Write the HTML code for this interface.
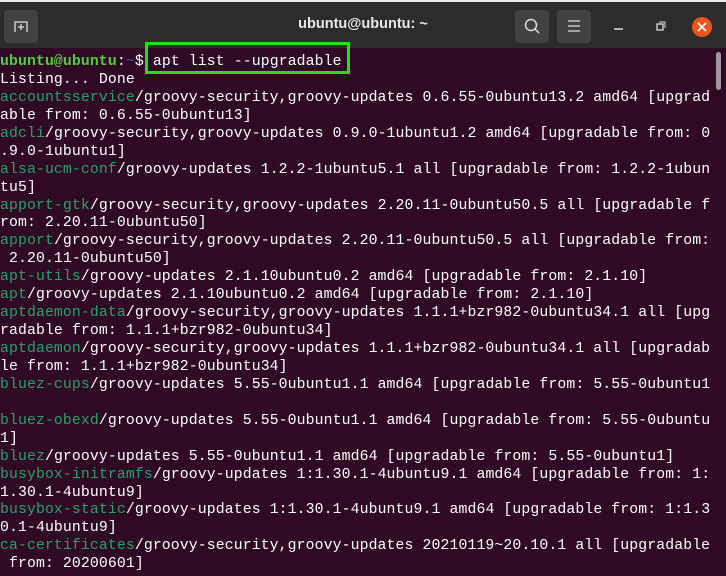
<!DOCTYPE html>
<html><head><style>
*{margin:0;padding:0;box-sizing:border-box}
body{width:726px;height:576px;overflow:hidden;background:#300a24;position:relative;font-family:"Liberation Sans",sans-serif}
.top{position:absolute;left:0;top:0;width:726px;height:2px;background:#ececec}
.hdr{position:absolute;left:0;top:2px;width:726px;height:46px;background:#2c2c2c}
.btn{position:absolute;top:8px;width:34px;height:33px;background:#424242;border-radius:4px}
.title{position:absolute;left:0;width:726px;top:14px;text-align:center;color:#e8e8e8;font-weight:bold;font-size:14.5px}
pre{position:absolute;left:0;top:54px;font-family:"Liberation Mono",monospace;font-size:14.8px;letter-spacing:0.11px;line-height:17.93px;color:#ffffff;white-space:pre}
.g{color:#26a269}.b{color:#3465a4}.gb{color:#4ecf3a;font-weight:bold}
.box{position:absolute;left:145px;top:42px;width:205px;height:32px;border:3px solid #22e01a}
.sb{position:absolute;left:716px;top:52px;width:5px;height:38px;background:#9a9a9a;border-radius:3px}
</style></head><body>
<div class="top"></div>
<div class="hdr">
<div class="btn" style="left:4px"><svg width="34" height="33"><path d="M11 22V12h12v10M17 14v6M14 17h6" stroke="#ddd" stroke-width="1.3" fill="none"/></svg></div>
<div class="title">ubuntu@ubuntu: ~</div>
<div class="btn" style="left:515px"><svg width="34" height="33"><circle cx="16" cy="15" r="5.5" stroke="#ddd" stroke-width="1.5" fill="none"/><path d="M20 19l4 4" stroke="#ddd" stroke-width="1.5"/></svg></div>
<div class="btn" style="left:557px"><svg width="34" height="33"><path d="M11 11h12M11 16h12M11 21h12" stroke="#ddd" stroke-width="1.3"/></svg></div>
<svg style="position:absolute;left:610px;top:10px" width="110" height="30"><path d="M4 17h9" stroke="#ddd" stroke-width="1.5"/><rect x="47" y="12" width="6" height="6" stroke="#ddd" stroke-width="1.3" fill="none"/><path d="M49 10h6v6" stroke="#ddd" stroke-width="1" fill="none"/><circle cx="92" cy="15" r="10" fill="#e95420"/><path d="M88 11l8 8M96 11l-8 8" stroke="#fff" stroke-width="1.6"/></svg>
</div>
<pre><span class="gb">ubuntu@ubuntu</span>:<span class="b">~</span>$ apt list --upgradable
Listing... Done
<span class="g">accountsservice</span>/groovy-security,groovy-updates 0.6.55-0ubuntu13.2 amd64 [upgrad
able from: 0.6.55-0ubuntu13]
<span class="g">adcli</span>/groovy-security,groovy-updates 0.9.0-1ubuntu1.2 amd64 [upgradable from: 0
.9.0-1ubuntu1]
<span class="g">alsa-ucm-conf</span>/groovy-updates 1.2.2-1ubuntu5.1 all [upgradable from: 1.2.2-1ubun
tu5]
<span class="g">apport-gtk</span>/groovy-security,groovy-updates 2.20.11-0ubuntu50.5 all [upgradable f
rom: 2.20.11-0ubuntu50]
<span class="g">apport</span>/groovy-security,groovy-updates 2.20.11-0ubuntu50.5 all [upgradable from:
 2.20.11-0ubuntu50]
<span class="g">apt-utils</span>/groovy-updates 2.1.10ubuntu0.2 amd64 [upgradable from: 2.1.10]
<span class="g">apt</span>/groovy-updates 2.1.10ubuntu0.2 amd64 [upgradable from: 2.1.10]
<span class="g">aptdaemon-data</span>/groovy-security,groovy-updates 1.1.1+bzr982-0ubuntu34.1 all [upg
radable from: 1.1.1+bzr982-0ubuntu34]
<span class="g">aptdaemon</span>/groovy-security,groovy-updates 1.1.1+bzr982-0ubuntu34.1 all [upgradab
le from: 1.1.1+bzr982-0ubuntu34]
<span class="g">bluez-cups</span>/groovy-updates 5.55-0ubuntu1.1 amd64 [upgradable from: 5.55-0ubuntu1

<span class="g">bluez-obexd</span>/groovy-updates 5.55-0ubuntu1.1 amd64 [upgradable from: 5.55-0ubuntu
1]
<span class="g">bluez</span>/groovy-updates 5.55-0ubuntu1.1 amd64 [upgradable from: 5.55-0ubuntu1]
<span class="g">busybox-initramfs</span>/groovy-updates 1:1.30.1-4ubuntu9.1 amd64 [upgradable from: 1:
1.30.1-4ubuntu9]
<span class="g">busybox-static</span>/groovy-updates 1:1.30.1-4ubuntu9.1 amd64 [upgradable from: 1:1.3
0.1-4ubuntu9]
<span class="g">ca-certificates</span>/groovy-security,groovy-updates 20210119~20.10.1 all [upgradable
 from: 20200601]</pre>
<div class="box"></div>
<div class="sb"></div>
</body></html>
